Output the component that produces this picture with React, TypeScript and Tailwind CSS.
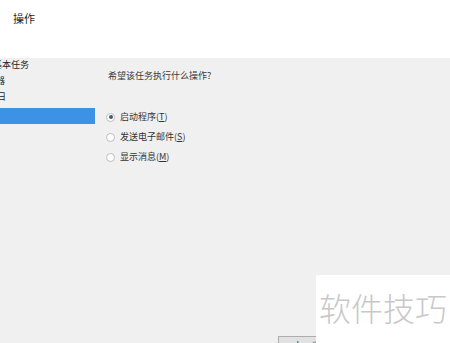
import React from "react";

const font = { fontFamily: '"Noto Sans CJK SC", "Noto Sans", sans-serif' };

function Radio({ checked, children }: { checked?: boolean; children: React.ReactNode }) {
  return (
    <div className="flex items-center h-[14px]">
      <div className="w-[9px] h-[9px] rounded-full border border-[#bcbcbc] bg-white flex items-center justify-center">
        {checked && <div className="w-[4px] h-[4px] rounded-full bg-[#4d5866]" />}
      </div>
      <span className="ml-[5px] text-[9px] leading-[12px] text-[#333]">{children}</span>
    </div>
  );
}

export default function App() {
  return (
    <div className="relative w-[450px] h-[343px] overflow-hidden bg-[#f0f0f0] flex flex-col" style={font}>
      <div className="h-[58px] bg-white pl-[13px] pt-[11px] shrink-0 text-[11px] leading-[14px] text-[#1e1e1e] font-normal">
        操作
      </div>
      <div className="flex flex-1">
        <div className="w-[95px] shrink-0 mt-[-1px] overflow-hidden">
          <div className="h-[16px] flex items-center ml-[-25px] whitespace-nowrap text-[9px] text-[#222]">创建基本任务</div>
          <div className="h-[16px] flex items-center ml-[-22px] whitespace-nowrap text-[9px] text-[#222]">触发器</div>
          <div className="h-[16px] flex items-center ml-[-12px] whitespace-nowrap text-[9px] text-[#222]">每日</div>
          <div className="h-[16px] mt-[3px] bg-[#3c92e4] flex items-center whitespace-nowrap text-[9px] text-white">
            <span className="ml-[-22px]">操作</span>
          </div>
          <div className="h-[16px] flex items-center ml-[-25px] whitespace-nowrap text-[9px] text-[#222]">完成</div>
        </div>
        <div className="pl-[11px] pt-[12px]">
          <div className="ml-[2px] text-[9px] leading-[12px] text-[#3a3a3a]">希望该任务执行什么操作?</div>
          <div className="mt-[28px] flex flex-col gap-[6px]">
            <Radio checked>
              启动程序(<span className="underline">T</span>)
            </Radio>
            <Radio>
              发送电子邮件(<span className="underline">S</span>)
            </Radio>
            <Radio>
              显示消息(<span className="underline">M</span>)
            </Radio>
          </div>
        </div>
      </div>
      <div className="h-[7px] shrink-0 pl-[278px] overflow-visible">
        <div className="w-[70px] h-[20px] border border-[#adadad] bg-[#e1e1e1] text-[9px] text-[#222] flex items-center justify-center">
          上一步(B)
        </div>
      </div>
      <div className="absolute left-[316px] top-[275px] w-[134px] h-[68px] bg-white">
        <div className="ml-[3px] mt-[15px] text-[32px] leading-[34px] text-[#c8c8c8] font-light whitespace-nowrap">
          软件技巧
        </div>
      </div>
    </div>
  );
}
